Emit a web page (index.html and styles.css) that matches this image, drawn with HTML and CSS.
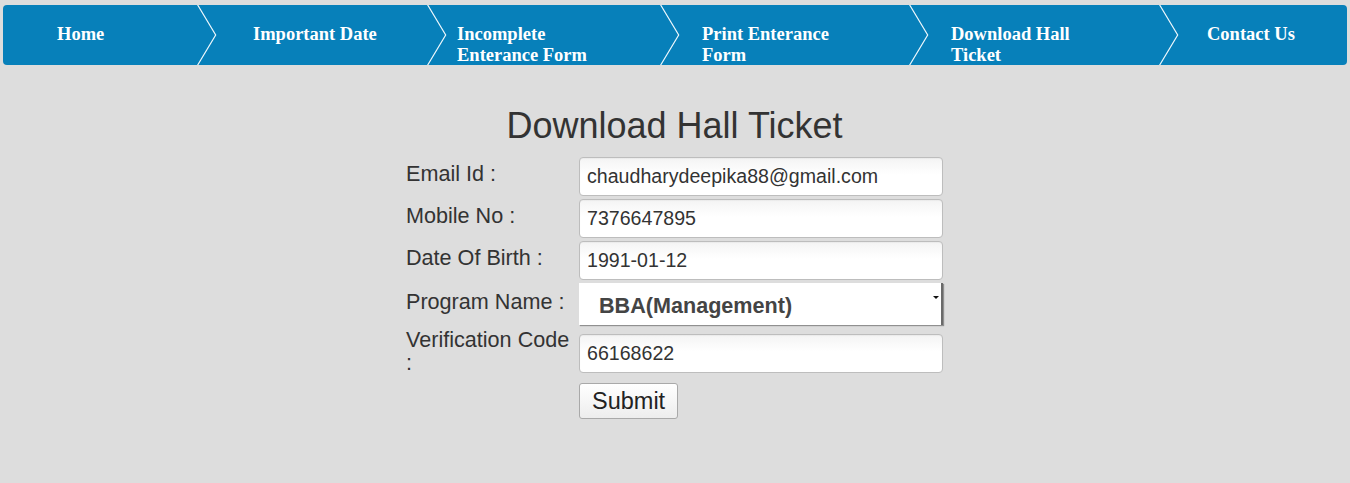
FILE: index.html
```html
<!DOCTYPE html>
<html>
<head>
<meta charset="utf-8">
<title>Download Hall Ticket</title>
<link rel="stylesheet" href="styles.css">
</head>
<body>
<nav class="nav">
  <ul class="nav-list">
    <li class="nav-item item-home"><span class="nav-text">Home</span></li>
    <li class="nav-item item-dates"><span class="nav-text">Important Date</span></li>
    <li class="nav-item item-incomplete"><span class="nav-text">Incomplete Enterance Form</span></li>
    <li class="nav-item item-print"><span class="nav-text">Print Enterance Form</span></li>
    <li class="nav-item item-download"><span class="nav-text">Download Hall Ticket</span></li>
    <li class="nav-item item-contact"><span class="nav-text">Contact Us</span></li>
  </ul>
</nav>

<main class="content">
  <h1 class="title">Download Hall Ticket</h1>
  <table class="form-table">
    <tr>
      <td class="label-cell"><span class="label">Email Id :</span></td>
      <td class="field-cell"><input class="text-input" type="text" value="chaudharydeepika88@gmail.com"></td>
    </tr>
    <tr>
      <td class="label-cell"><span class="label">Mobile No :</span></td>
      <td class="field-cell"><input class="text-input" type="text" value="7376647895"></td>
    </tr>
    <tr>
      <td class="label-cell"><span class="label">Date Of Birth :</span></td>
      <td class="field-cell"><input class="text-input" type="text" value="1991-01-12"></td>
    </tr>
    <tr>
      <td class="label-cell"><span class="label">Program Name :</span></td>
      <td class="field-cell">
        <span class="select-wrap">
          <select class="select-input">
            <option>BBA(Management)</option>
          </select>
        </span>
      </td>
    </tr>
    <tr>
      <td class="label-cell"><span class="label">Verification Code :</span></td>
      <td class="field-cell"><input class="text-input" type="text" value="66168622"></td>
    </tr>
    <tr>
      <td class="label-cell"></td>
      <td class="field-cell submit-cell"><button class="submit-btn" type="button">Submit</button></td>
    </tr>
  </table>
</main>
</body>
</html>
```

FILE: styles.css
```css
html, body {
  margin: 0;
  padding: 0;
}

body {
  background: #dddddd;
  font-family: "Liberation Sans", Arial, sans-serif;
  color: #333333;
}

/* ---------- navigation ---------- */
.nav {
  margin: 5px 3px 0;
}

.nav-list {
  list-style: none;
  margin: 0;
  padding: 0;
  display: flex;
  height: 60px;
  background: #0780ba;
  border-radius: 4px;
}

.nav-item {
  position: relative;
  box-sizing: border-box;
  padding-top: 19px;
  font-family: "Liberation Serif", "Times New Roman", serif;
  font-weight: bold;
  font-size: 18.5px;
  line-height: 21px;
  color: #ffffff;
}

.nav-text {
  display: block;
  max-width: 150px;
}

.nav-item + .nav-item::before {
  content: "";
  position: absolute;
  left: 0;
  top: 0;
  width: 20px;
  height: 60px;
  background: #e8f4fb;
  clip-path: polygon(0 0, 1.4px 0, 19.4px 50%, 1.4px 100%, 0 100%, 18px 50%);
}

.item-home { width: 194px; padding-left: 54px; }
.item-dates { width: 230px; padding-left: 56px; }
.item-incomplete { width: 233px; padding-left: 30px; }
.item-print { width: 249px; padding-left: 42px; }
.item-download { width: 250px; padding-left: 42px; }
.item-contact { width: 188px; padding-left: 48px; }

/* ---------- form ---------- */
.content {
  display: flex;
  flex-direction: column;
  align-items: center;
  padding-right: 1px;
}

.title {
  margin: 40px 0 9px;
  font-size: 36px;
  line-height: 41px;
  font-weight: normal;
  color: #333333;
}

.form-table {
  border-collapse: separate;
  border-spacing: 0;
}

.form-table td {
  padding: 1.5px 0;
  vertical-align: middle;
}

.label-cell {
  width: 173px;
  box-sizing: border-box;
  padding-right: 4px !important;
}

.label {
  display: block;
  font-size: 21.6px;
  line-height: 23px;
  padding-bottom: 5px;
  color: #333333;
}

.field-cell {
  width: 364px;
}

.submit-cell {
  padding-top: 3px !important;
}

.text-input {
  display: block;
  box-sizing: border-box;
  width: 364px;
  height: 39px;
  margin: 0;
  padding: 0 7px;
  border: 1px solid #bdbdbd;
  border-radius: 4px;
  background: linear-gradient(to bottom, #f4f4f4 0%, #ffffff 45%);
  box-shadow: inset 0 1px 1px rgba(0, 0, 0, 0.04);
  font-family: "Liberation Sans", Arial, sans-serif;
  font-size: 19.6px;
  color: #333333;
}

.select-wrap {
  display: block;
  position: relative;
  width: 364px;
  height: 42px;
}

.select-wrap::after {
  content: "";
  position: absolute;
  right: 4px;
  top: 13px;
  width: 0;
  height: 0;
  border-left: 3px solid transparent;
  border-right: 3px solid transparent;
  border-top: 3px solid #111111;
}

.select-input {
  -webkit-appearance: none;
  appearance: none;
  display: block;
  box-sizing: border-box;
  width: 364px;
  height: 42px;
  margin: 0;
  padding: 3px 0 0 20px;
  border: 0;
  border-right: 2px solid #6a6a6a;
  border-radius: 0;
  background: #ffffff;
  box-shadow: 1px 1px 1px rgba(0, 0, 0, 0.35);
  font-family: "Liberation Sans", Arial, sans-serif;
  font-size: 21.6px;
  font-weight: bold;
  color: #444444;
}

.submit-btn {
  display: block;
  box-sizing: border-box;
  height: 36px;
  margin: 0;
  padding: 0 12px;
  border: 1px solid #a9a9a9;
  border-radius: 3px;
  background: linear-gradient(to bottom, #ffffff 0%, #ededed 100%);
  font-family: "Liberation Sans", Arial, sans-serif;
  font-size: 23.5px;
  color: #222222;
}
```
